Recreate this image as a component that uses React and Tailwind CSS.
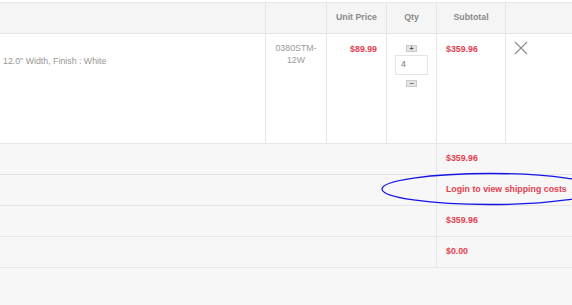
import React from 'react';

const red = 'text-[#e2414f]';

const SummaryRow = ({ value }) => (
  <div className="flex h-[31px] border-b border-[#e6e6e6]">
    <div className="w-[437px] border-r border-[#e6e6e6]"></div>
    <div className={`flex items-center pl-[9px] text-[8.8px] font-bold ${red}`}>{value}</div>
  </div>
);

const QtyButton = ({ sign }) => (
  <span className="flex h-[7px] w-[11px] items-center justify-center border border-[#c9c9c9] bg-[#e4e4e4] text-[7px] font-bold leading-none text-[#555]">
    {sign}
  </span>
);

const App = () => {
  return (
    <div
      className="relative h-[305px] w-[572px] overflow-hidden bg-[#f7f7f7]"
      style={{ fontFamily: '"Liberation Sans", Arial, sans-serif' }}
    >
      <div className="h-[2px] bg-white"></div>

      {/* Header */}
      <div className="flex h-[32px] border-y border-[#e6e6e6] bg-[#f5f5f5] text-[8.8px] font-bold text-[#8a8a8a]">
        <div className="w-[266px] border-r border-[#e6e6e6]"></div>
        <div className="w-[61px] border-r border-[#e6e6e6]"></div>
        <div className="flex w-[60px] items-center justify-center border-r border-[#e6e6e6]">Unit Price</div>
        <div className="flex w-[50px] items-center justify-center border-r border-[#e6e6e6]">Qty</div>
        <div className="flex w-[69px] items-center justify-center border-r border-[#e6e6e6]">Subtotal</div>
        <div className="flex-1"></div>
      </div>

      {/* Item row */}
      <div className="flex h-[110px] border-b border-[#e6e6e6] bg-white text-[8.8px]">
        <div className="w-[266px] border-r border-[#e6e6e6] pl-[3px] pt-[21px] text-[#9a9692]">
          12.0" Width, Finish : White
        </div>
        <div className="w-[61px] border-r border-[#e6e6e6] pt-[8px] text-center leading-[12px] text-[#9a9a9a]">
          0380STM-
          <br />
          12W
        </div>
        <div className={`w-[60px] border-r border-[#e6e6e6] pr-[9px] pt-[9px] text-right font-bold ${red}`}>$89.99</div>
        <div className="flex w-[50px] flex-col items-center border-r border-[#e6e6e6] pt-[11px]">
          <QtyButton sign="+" />
          <div className="mt-[3px] flex h-[20px] w-[33px] items-center border border-[#e3e3e3] bg-white pl-[5px] text-[8.8px] text-[#777]">
            4
          </div>
          <div className="mt-[5px]">
            <QtyButton sign="−" />
          </div>
        </div>
        <div className={`w-[69px] border-r border-[#e6e6e6] pl-[9px] pt-[9px] font-bold ${red}`}>$359.96</div>
        <div className="flex-1 pl-[8px] pt-[7px]">
          <svg width="14" height="14" viewBox="0 0 14 14">
            <path d="M1 1 L13 13 M13 1 L1 13" stroke="#8c8c8c" strokeWidth="1.1" fill="none" />
          </svg>
        </div>
      </div>

      {/* Totals */}
      <SummaryRow value="$359.96" />
      <SummaryRow value="Login to view shipping costs" />
      <SummaryRow value="$359.96" />
      <SummaryRow value="$0.00" />

      {/* Annotation ellipse */}
      <svg className="absolute left-0 top-0" width="572" height="305">
        <ellipse cx="490" cy="189" rx="108" ry="15.5" fill="none" stroke="#1414e6" strokeWidth="1.3" />
      </svg>
    </div>
  );
};

export default App;
